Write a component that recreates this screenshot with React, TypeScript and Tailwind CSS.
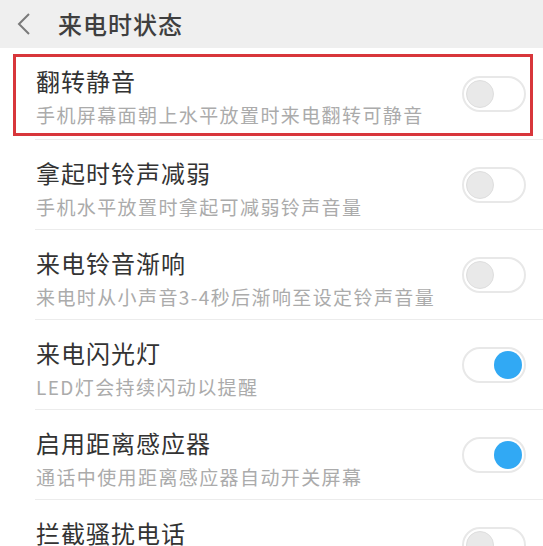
import React from "react";

type Item = { title: string; sub?: string; on: boolean };

const items: Item[] = [
  { title: "翻转静音", sub: "手机屏幕面朝上水平放置时来电翻转可静音", on: false },
  { title: "拿起时铃声减弱", sub: "手机水平放置时拿起可减弱铃声音量", on: false },
  { title: "来电铃音渐响", sub: "来电时从小声音3-4秒后渐响至设定铃声音量", on: false },
  { title: "来电闪光灯", sub: "LED灯会持续闪动以提醒", on: true },
  { title: "启用距离感应器", sub: "通话中使用距离感应器自动开关屏幕", on: true },
  { title: "拦截骚扰电话", sub: "", on: false },
];

function Toggle({ on }: { on: boolean }) {
  return (
    <div
      className={`w-[64px] h-[36px] rounded-full border-2 border-[#e8e8e8] bg-white flex items-center px-[2px] ${
        on ? "justify-end" : "justify-start"
      }`}
    >
      {on ? (
        <div className="w-[28px] h-[28px] rounded-full bg-[#31a9f4]" />
      ) : (
        <div className="w-[28px] h-[28px] rounded-full bg-[#e9e9e9] border border-[#dedede]" />
      )}
    </div>
  );
}

export default function App() {
  return (
    <div
      className="w-[543px] h-[546px] overflow-hidden bg-white"
      style={{ fontFamily: '"Noto Sans CJK SC", "Noto Sans", sans-serif' }}
    >
      <div className="h-[48px] bg-[#efefef] flex items-center">
        <svg width="14" height="22" viewBox="0 0 14 22" className="ml-[17px]">
          <polyline
            points="12,1 2,11 12,21"
            fill="none"
            stroke="#7a7a7a"
            strokeWidth="2"
          />
        </svg>
        <span className="ml-[27px] text-[24px] leading-[30px] text-[#3f3f3f] font-medium tracking-[1px]">
          来电时状态
        </span>
      </div>
      {items.map((it, i) => (
        <div key={i} className={`relative ${i === 0 ? "h-[92px]" : "h-[90px]"}`}>
          {i === 0 && (
            <div className="absolute left-[13px] top-[6px] w-[520px] h-[82px] border-[3px] border-[#d8363b] pointer-events-none" />
          )}
          <div className="ml-[35px] h-full border-b border-[#ececec] flex items-center pr-[17px]">
            <div className="flex-1 self-start pt-[19px] pl-[1px]">
              <div className="text-[24px] leading-[28px] text-[#333333] tracking-[1px]">
                {it.title}
              </div>
              {it.sub ? (
                <div className="mt-[8px] text-[19px] leading-[24px] text-[#ababab] tracking-[1.4px]">
                  {it.sub}
                </div>
              ) : null}
            </div>
            <Toggle on={it.on} />
          </div>
        </div>
      ))}
    </div>
  );
}
